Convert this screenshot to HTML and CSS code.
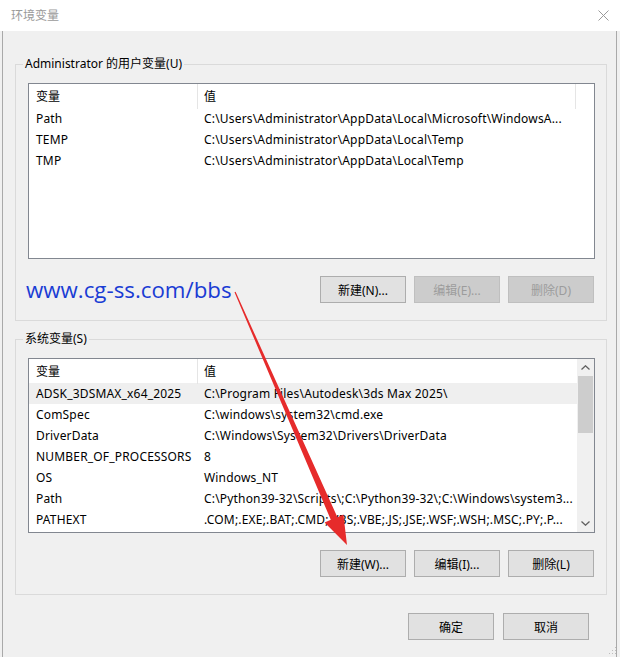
FILE: index.html
```html
<!DOCTYPE html>
<html lang="zh-CN">
<head>
<meta charset="utf-8">
<title>环境变量</title>
<link rel="stylesheet" href="styles.css">
</head>
<body>
<div class="window">
  <div class="titlebar">
    <span class="title">环境变量</span>
    <svg class="close" width="11" height="11" viewBox="0 0 11 11"><path d="M0.5 0.5 L10.5 10.5 M10.5 0.5 L0.5 10.5" stroke="#9a9a9a" stroke-width="1" fill="none"/></svg>
  </div>
  <div class="client">
    <fieldset class="group group-user">
      <legend>Administrator 的用户变量(U)</legend>
      <div class="listview lv-user">
        <div class="lv-body">
          <div class="lv-header">
            <div class="hcell hname">变量</div>
            <div class="hcell hvalue">值</div>
            <div class="hcell hrest"></div>
          </div>
          <div class="lv-row"><div class="cname">Path</div><div class="cvalue">C:\Users\Administrator\AppData\Local\Microsoft\WindowsA...</div></div>
          <div class="lv-row"><div class="cname">TEMP</div><div class="cvalue">C:\Users\Administrator\AppData\Local\Temp</div></div>
          <div class="lv-row"><div class="cname">TMP</div><div class="cvalue">C:\Users\Administrator\AppData\Local\Temp</div></div>
        </div>
      </div>
      <div class="btn-row">
        <span class="watermark">www.cg-ss.com/bbs</span>
        <button class="btn">新建(N)...</button>
        <button class="btn disabled">编辑(E)...</button>
        <button class="btn disabled">删除(D)</button>
      </div>
    </fieldset>

    <fieldset class="group group-sys">
      <legend>系统变量(S)</legend>
      <div class="listview lv-sys">
        <div class="lv-body">
          <div class="lv-header">
            <div class="hcell hname">变量</div>
            <div class="hcell hvalue">值</div>
          </div>
          <div class="lv-row selected"><div class="cname">ADSK_3DSMAX_x64_2025</div><div class="cvalue">C:\Program Files\Autodesk\3ds Max 2025\</div></div>
          <div class="lv-row"><div class="cname">ComSpec</div><div class="cvalue">C:\windows\system32\cmd.exe</div></div>
          <div class="lv-row"><div class="cname">DriverData</div><div class="cvalue">C:\Windows\System32\Drivers\DriverData</div></div>
          <div class="lv-row"><div class="cname">NUMBER_OF_PROCESSORS</div><div class="cvalue">8</div></div>
          <div class="lv-row"><div class="cname">OS</div><div class="cvalue">Windows_NT</div></div>
          <div class="lv-row"><div class="cname">Path</div><div class="cvalue">C:\Python39-32\Scripts\;C:\Python39-32\;C:\Windows\system3...</div></div>
          <div class="lv-row"><div class="cname">PATHEXT</div><div class="cvalue">.COM;.EXE;.BAT;.CMD;.VBS;.VBE;.JS;.JSE;.WSF;.WSH;.MSC;.PY;.P...</div></div>
        </div>
        <div class="scrollbar">
          <div class="sb-btn"><svg width="9" height="5" viewBox="0 0 9 5"><path d="M0.5 4.5 L4.5 0.8 L8.5 4.5" stroke="#606060" stroke-width="1.3" fill="none"/></svg></div>
          <div class="sb-track"><div class="sb-thumb"></div></div>
          <div class="sb-btn"><svg width="9" height="5" viewBox="0 0 9 5"><path d="M0.5 0.5 L4.5 4.2 L8.5 0.5" stroke="#606060" stroke-width="1.3" fill="none"/></svg></div>
        </div>
      </div>
      <div class="btn-row">
        <button class="btn">新建(W)...</button>
        <button class="btn">编辑(I)...</button>
        <button class="btn">删除(L)</button>
      </div>
    </fieldset>

    <div class="dialog-buttons">
      <button class="btn">确定</button>
      <button class="btn">取消</button>
    </div>
  </div>

  <svg class="arrow" width="620" height="657" viewBox="0 0 620 657">
    <polygon points="234.5,292.2 235.6,291.8 337.4,517.2 343.4,514.4 347,545 324.6,522.6 330.8,519.8" fill="#e62b2b"/>
  </svg>
  <svg class="grip" width="8" height="8" viewBox="0 0 8 8">
    <rect x="6" y="0" width="1" height="1" fill="#bdbdbd"/>
    <rect x="3" y="3" width="1" height="1" fill="#bdbdbd"/>
    <rect x="6" y="3" width="1" height="1" fill="#bdbdbd"/>
    <rect x="0" y="6" width="1" height="1" fill="#bdbdbd"/>
    <rect x="3" y="6" width="1" height="1" fill="#bdbdbd"/>
    <rect x="6" y="6" width="1" height="1" fill="#bdbdbd"/>
  </svg>
</div>
</body>
</html>
```

FILE: styles.css
```css
* { box-sizing: border-box; }

html, body {
  margin: 0;
  padding: 0;
  background: #f0f0f0;
}

body {
  font-family: "Noto Sans", "Noto Sans CJK SC", sans-serif;
  font-size: 12px;
  color: #000;
}

.window {
  position: relative;
  width: 620px;
  height: 657px;
  overflow: hidden;
  background: #f0f0f0;
}

.titlebar {
  height: 31px;
  background: #fff;
  display: flex;
  align-items: center;
  justify-content: space-between;
  padding: 0 11px 0 11px;
}

.title {
  color: #9a9a9a;
  font-size: 12px;
  line-height: 16px;
}

.close {
  display: block;
}

.client {
  height: 626px;
  margin: 0 3px 0 2px;
  border-left: 1px solid #a9a9a9;
  border-right: 1px solid #a9a9a9;
  display: flex;
  flex-direction: column;
}

.group {
  border: 1px solid #dadada;
  margin: 0 9px 0 12px;
  padding: 11px 11px 17px 12px;
  min-width: 0;
}

.group-user {
  margin-top: 25px;
}

.group-sys {
  margin-top: 10px;
  padding-top: 11px;
  padding-bottom: 17px;
}

.group legend {
  padding: 0 2px;
  margin-left: -5px;
  line-height: 16px;
  font-size: 12px;
}

.listview {
  background: #fff;
  border: 1px solid #828790;
  display: flex;
  overflow: hidden;
}

.lv-user { height: 176px; }
.lv-sys { height: 175px; }

.lv-body {
  flex: 1;
  min-width: 0;
}

.lv-header {
  display: grid;
  grid-template-columns: 169px 378px 1fr;
  height: 24px;
}

.lv-sys .lv-header {
  grid-template-columns: 169px 1fr;
}

.hcell {
  line-height: 25px;
  border-right: 1px solid #e5e5e5;
  white-space: nowrap;
}

.hname { padding-left: 7px; }
.hvalue { padding-left: 6px; }
.hrest { border-right: none; }
.lv-sys .hvalue { border-right: none; }

.lv-row {
  display: grid;
  grid-template-columns: 169px 1fr;
  height: 21px;
  line-height: 22px;
  letter-spacing: 0.18px;
}

.lv-row.selected {
  background: #efefef;
}

.cname {
  padding-left: 7px;
  white-space: nowrap;
  overflow: hidden;
}

.cvalue {
  padding-left: 6px;
  white-space: nowrap;
}

.scrollbar {
  width: 17px;
  background: #f0f0f0;
  display: flex;
  flex-direction: column;
}

.sb-btn {
  height: 17px;
  display: flex;
  align-items: center;
  justify-content: center;
}

.sb-track {
  flex: 1;
  padding: 0 1px;
}

.sb-thumb {
  height: 57px;
  background: #cdcdcd;
}

.btn-row {
  display: flex;
  align-items: center;
  justify-content: flex-end;
  gap: 8px;
  margin-top: 17px;
  margin-right: 1px;
}

.watermark {
  margin-right: auto;
  margin-left: -2px;
  color: #1a3cd4;
  font-size: 22.3px;
  line-height: 27px;
  font-family: "Open Sans", "Noto Sans", sans-serif;
}

.btn {
  width: 86px;
  height: 27px;
  margin: 0;
  padding: 0;
  background: #e1e1e1;
  border: 1px solid #adadad;
  border-radius: 0;
  font-family: "Noto Sans", "Noto Sans CJK SC", sans-serif;
  font-size: 12px;
  color: #000;
}

.btn.disabled {
  background: #cccccc;
  border-color: #bfbfbf;
  color: #9c9c9c;
}

.dialog-buttons {
  display: flex;
  justify-content: flex-end;
  gap: 9px;
  margin-top: 18px;
  margin-right: 27px;
}

.arrow {
  position: absolute;
  left: 0;
  top: 0;
  pointer-events: none;
}

.grip {
  position: absolute;
  right: 3px;
  bottom: 2px;
}
```
